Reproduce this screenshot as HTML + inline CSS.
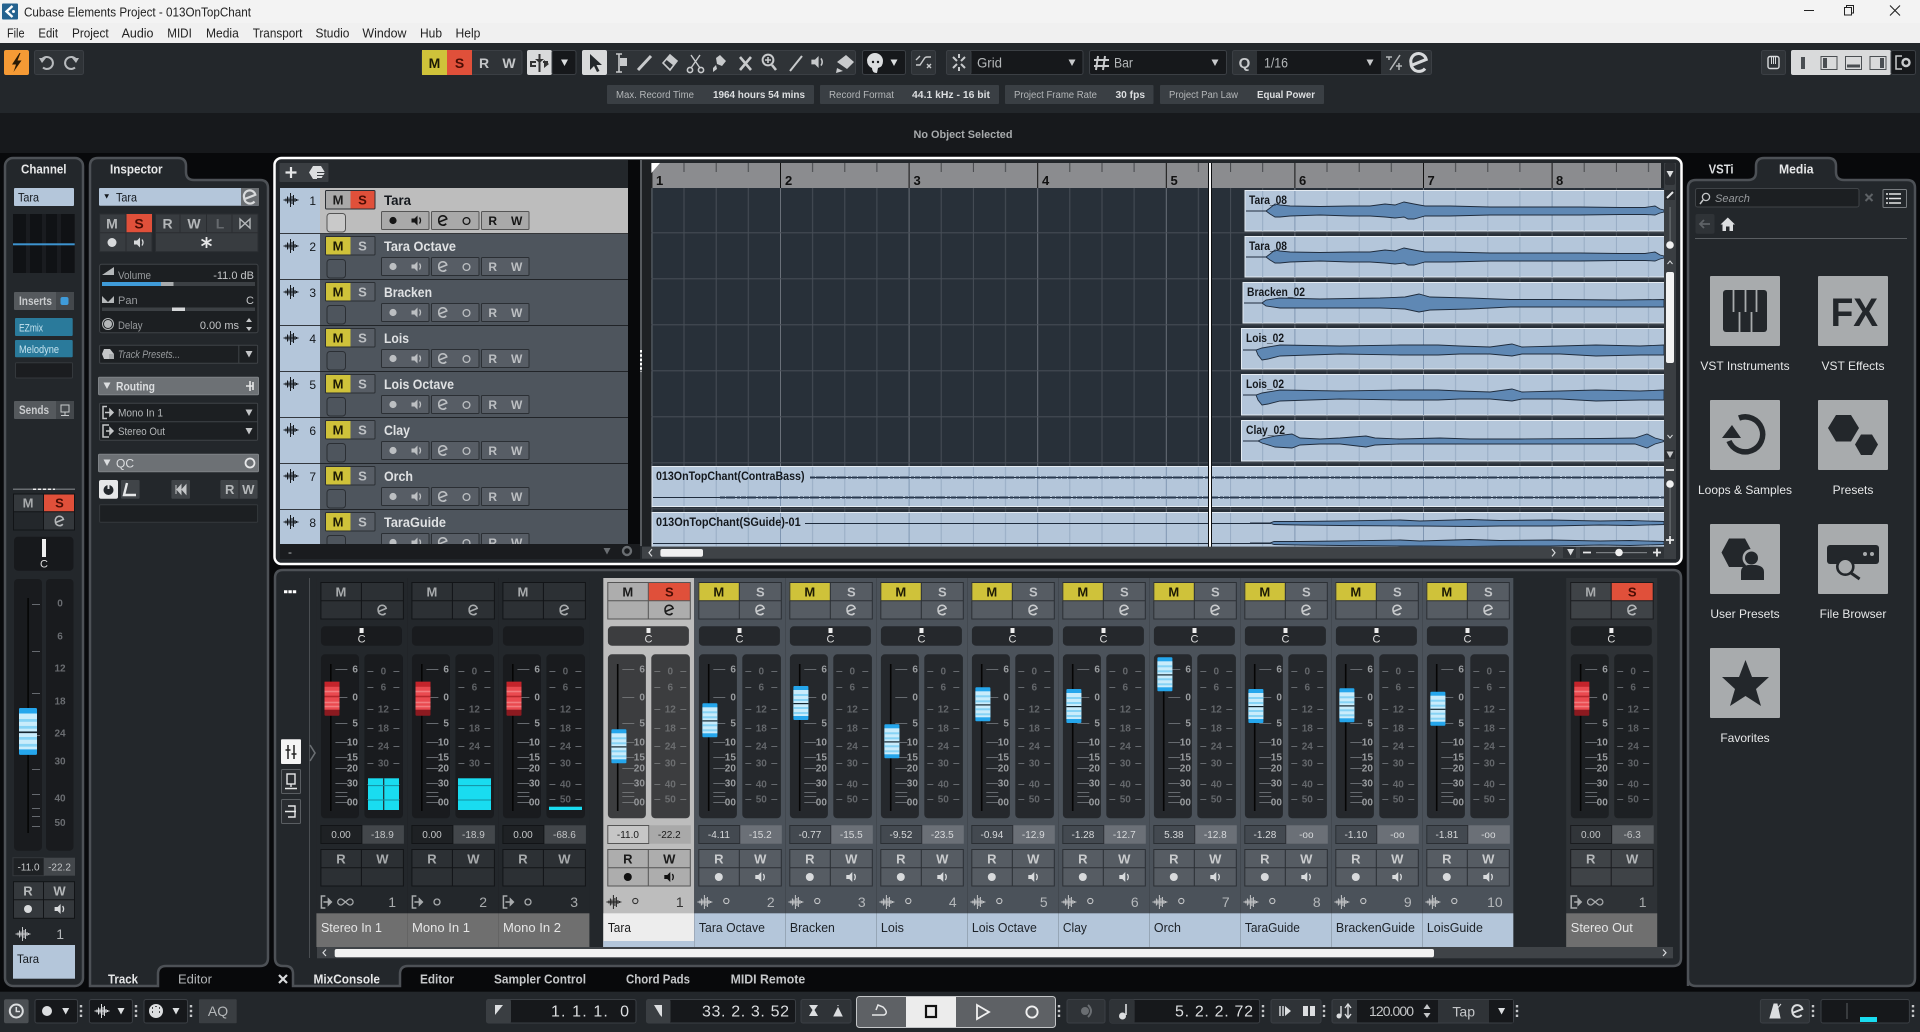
<!DOCTYPE html>
<html><head><meta charset="utf-8"><title>Cubase Elements Project - 013OnTopChant</title>
<style>
html,body{margin:0;padding:0;background:#08090b;width:1920px;height:1032px;overflow:hidden}
svg{display:block}
text{font-family:"Liberation Sans",sans-serif;fill:#c4c6c8;font-size:11px;white-space:pre}
.a{text-anchor:middle}.e{text-anchor:end}.b{font-weight:bold}
.f9{font-size:9.5px}.f10{font-size:10px}.f11{font-size:11px}.f12{font-size:12px}.f13{font-size:13px}.f14{font-size:14px}.f15{font-size:15px}.f16{font-size:16px}
.d{fill:#15171a}.w{fill:#fff}.g{fill:#989b9e}.l{fill:#dcdee0}
.gb{fill:#2f3337;stroke:#3b3f44}.dk{fill:#16181b;stroke:#3b3f44}
.tr{--bg:#4b525a;--c:#565c63;--bd:#2b2f34;--mf:#cfc23a;--mc:#1d1a05;--sf:#565c63;--sc:#c0c3c6;--tc:#c9cbcd;--ic:#d8dadc;--dk:#25282c;--v1:#434950;--v2:#6b7077;--vt:#d7d9db;--tk:#666a6f;--fn:#9a9da0;--mn:#64676b;--nm:#b4c6da;--nt:#1d2228;--num:#b5b8bb}
.in{--bg:#23272b;--c:#2c3034;--bd:#121417;--mf:#2c3034;--mc:#a8abad;--sf:#2c3034;--sc:transparent;--tc:#a8abad;--ic:transparent;--dk:#191b1e;--v1:#1e2124;--v2:#43474b;--vt:#c4c6c8;--tk:#666a6f;--fn:#9a9da0;--mn:#5e6165;--nm:#6f6f6f;--nt:#e6e6e6;--num:#a8abad}
.so{--bg:#2e3236;--c:#3f4347;--bd:#191b1e;--mf:#3f4347;--mc:#a8abad;--sf:#e0503a;--sc:#4a0d04;--tc:#b4b7b9;--ic:transparent;--dk:#1d2023;--v1:#313539;--v2:#565a5e;--vt:#c4c6c8;--tk:#666a6f;--fn:#9a9da0;--mn:#5e6165;--nm:#6f6f6f;--nt:#e6e6e6;--num:#a8abad}
.se{--bg:#bdbdbd;--c:#adadad;--bd:#555;--mf:#adadad;--mc:#1b1b1b;--sf:#e0503a;--sc:#4a0d04;--tc:#1b1b1b;--ic:#111;--dk:#3c3d3f;--v1:#c6c6c6;--v2:#a9a9a9;--vt:#1b1b1b;--tk:#6e7072;--fn:#95979a;--mn:#6c6e70;--nm:#ededed;--nt:#1b1b1b;--num:#333}
.r0{--rb:#4e555d;--rc:#575d65;--rm:#cfc23a;--rmc:#1d1a05;--rs:#575d65;--rsc:#bec1c4;--ri:#bcbfc2;--rbd:#2b2f34;--rck:#4e555d}
.r1{--rb:#bdbdbd;--rc:#a9a9a9;--rm:#a9a9a9;--rmc:#1b1b1b;--rs:#e0503a;--rsc:#4a0d04;--ri:#151515;--rbd:#555;--rck:#c9c9c9}
.fbg{fill:var(--bg)}.fc{fill:var(--c)}.fm{fill:var(--mf)}.fs{fill:var(--sf)}.fd{fill:var(--dk)}.fv1{fill:var(--v1)}.fv2{fill:var(--v2)}.fn2{fill:var(--nm)}
.sb{stroke:var(--bd);fill:none}.tk{stroke:var(--tk);fill:none}.tm{fill:var(--mc)}.ts{fill:var(--sc)}.tc{fill:var(--tc)}.vt{fill:var(--vt)}.nt{fill:var(--nt)}.num{fill:var(--num)}.fnum{fill:var(--fn)}.mnum{fill:var(--mn)}
.cc{color:var(--tc)}.ci{color:var(--ic)}.cn{color:var(--num)}
.rb{fill:var(--rb)}.rc{fill:var(--rc);stroke:var(--rbd)}.rm{fill:var(--rm)}.rs{fill:var(--rs)}.rmt{fill:var(--rmc)}.rst{fill:var(--rsc)}.rit{fill:var(--ri)}.ri{color:var(--ri)}.rck{fill:var(--rck);stroke:var(--rbd)}
.evt{fill:#b4c6da;stroke:#e4ebf2;stroke-width:1}
.wv{fill:#5f88b4;stroke:#1f2c3d;stroke-width:.9}
.tt{fill:#14181d;font-size:11.5px;font-weight:bold}
</style></head><body>
<svg xmlns="http://www.w3.org/2000/svg" width="1920" height="1032" viewBox="0 0 1920 1032">
<defs>
<g id="i-spk" fill="currentColor"><path d="M-5-2H-2L1-5V5L-2 2H-5Z"/><path d="M3-3Q5 0 3 3" fill="none" stroke="currentColor" stroke-width="1.3"/></g>
<path id="i-e" d="M-4.2 1.6L3.8-1.6A4 4 0 0 0-4.2.4A4.2 4.2 0 0 0 3.2 3.2" fill="none" stroke="currentColor" stroke-width="1.6"/>
<path id="i-wv" d="M-7.5 0H7.5M-5-1.5V1.5M-3.5-3.5V3.5M-2-2.5V2.5M-.5-7V7M1-4V4M2.5-5V5M4-2V2M5.5-1V1" fill="none" stroke="currentColor" stroke-width="1"/>
<polygon id="i-dn" points="-3.5,-3 3.5,-3 0,3.5" fill="currentColor"/>
<g id="i-in" fill="none" stroke="currentColor" stroke-width="1.5"><path d="M-1-6H-5V6H-1"/><path d="M-3 0H3"/><path d="M2-3L5 0L2 3Z" fill="currentColor"/></g>
<g id="i-out" fill="none" stroke="currentColor" stroke-width="1.5"><path d="M1-6H-5V6H1"/><path d="M-2 0H3"/><path d="M2-3L5 0L2 3Z" fill="currentColor"/></g>
<g id="i-dots" fill="#c4c6c8"><rect x="-1.2" y="-6" width="2.4" height="2.4"/><rect x="-1.2" y="-1.2" width="2.4" height="2.4"/><rect x="-1.2" y="3.6" width="2.4" height="2.4"/></g>
<g id="kb"><rect width="15" height="34" rx="1" fill="#25a6ec"/><rect y="4" width="15" height="26" fill="#c9ecfb"/><rect y="8" width="15" height="2" fill="#86d3f5"/><rect y="13" width="15" height="2" fill="#86d3f5"/><rect y="21" width="15" height="2" fill="#86d3f5"/><rect y="26" width="15" height="2" fill="#86d3f5"/><rect y="17" width="15" height="1.2" fill="#142630"/></g>
<g id="kr"><rect width="15" height="34" rx="1" fill="#8c1a20"/><rect y="0" width="15" height="5" fill="#c4242b"/><rect y="5" width="15" height="23" fill="#ea4a50"/><rect y="9" width="15" height="1.6" fill="#f27c7f"/><rect y="14" width="15" height="1.6" fill="#b8272d"/><rect y="20" width="15" height="1.6" fill="#f27c7f"/><rect y="24" width="15" height="1.6" fill="#f27c7f"/></g>
<g id="S">
<rect class="fbg" x="-4" y="578" width="91" height="369"/>
<rect class="fn2" x="-4" y="913.3" width="91" height="33.7"/>
<rect class="fm" x="0" y="582.3" width="41" height="18.4"/><rect class="fs" x="41" y="582.3" width="42.3" height="18.4"/>
<rect class="fc" x="0" y="600.7" width="83.3" height="18.6"/>
<path class="sb" d="M.5 582.5H83V619H.5ZM.5 600.7H83M41 582.5V619"/>
<text class="tm a b f13" x="20.5" y="596.5">M</text><text class="ts a b f13" x="62" y="596.5">S</text>
<use href="#i-e" x="62" y="610" class="cc"/>
<rect class="fd" x=".6" y="626.3" width="81" height="19.4" rx="4"/>
<rect class="fd" x=".6" y="654.3" width="38" height="164" rx="4"/><rect class="fd" x="44" y="654.3" width="38.6" height="164" rx="4"/>
<rect x="9.6" y="664" width="1.6" height="147" fill="#050505"/>
<path class="tk" d="M15 669.5H27M15 697.5H27M15 723.5H27M15 742.5H27M15 757.5H27M15 768.5H27M15 783.5H27M15 792.5H27M15 796.5H27M15 802.5H27M47 671.5H53M73 671.5H79M47 687.5H53M73 687.5H79M47 709.5H53M73 709.5H79M47 728.5H53M73 728.5H79M47 746.5H53M73 746.5H79M47 763.5H53M73 763.5H79M47 784.5H53M73 784.5H79M47 799.5H53M73 799.5H79"/>
<g class="fnum"><text class="fnum e f10 b" x="37.6" y="672.5">6</text><text class="fnum e f10 b" x="37.6" y="700.5">0</text><text class="fnum e f10 b" x="37.6" y="726.5">5</text><text class="fnum e f10 b" x="37.6" y="745.5">10</text><text class="fnum e f10 b" x="37.6" y="760.5">15</text><text class="fnum e f10 b" x="37.6" y="771.5">20</text><text class="fnum e f10 b" x="37.6" y="786.5">30</text><text class="fnum e f10 b" x="37.6" y="805.5">00</text></g>
<text class="mnum a f10 b" x="63" y="674.5">0</text><text class="mnum a f10 b" x="63" y="690.5">6</text><text class="mnum a f10 b" x="63" y="712.5">12</text><text class="mnum a f10 b" x="63" y="731.5">18</text><text class="mnum a f10 b" x="63" y="749.5">24</text><text class="mnum a f10 b" x="63" y="766.5">30</text><text class="mnum a f10 b" x="63" y="787.5">40</text><text class="mnum a f10 b" x="63" y="802.5">50</text>
<rect class="fv1" x=".5" y="825.5" width="41" height="18"/><rect class="sb" x=".5" y="825.5" width="41" height="18"/><rect class="fv2" x="42" y="825.3" width="41.5" height="18.4"/>
<rect class="fc" x="0" y="849.3" width="83.3" height="37"/>
<path class="sb" d="M.5 849.5H83V886H.5ZM.5 867.7H83M41 849.5V886"/>
<text class="tc a b f13" x="20.5" y="863.5">R</text><text class="tc a b f13" x="62" y="863.5">W</text>
<circle class="ci" cx="20.5" cy="877" r="4" fill="currentColor"/><use href="#i-spk" x="62" y="877" class="ci"/>
</g>
<g id="P"><rect x="39.2" y="628" width="4" height="5" fill="#eee"/><text class="a f11" x="41.2" y="642.5" style="fill:#ddd">C</text></g>
<g id="row">
<rect x="280" y="0" width="40" height="45.3" fill="#b4c6da"/><rect class="rb" x="320" y="0" width="308" height="45.3"/>
<rect x="280" y="45.3" width="348" height="1" fill="#16181b"/>
<use href="#i-wv" x="291" y="12" style="color:#14181d"/>
<rect class="rm" x="325.5" y="2.5" width="25" height="18.5"/><rect class="rs" x="350.5" y="2.5" width="24.5" height="18.5"/>
<rect x="325.5" y="2.5" width="49.5" height="18.5" rx="1" fill="none" stroke="#2b2f34"/>
<text class="rmt a b f13" x="338" y="16.5">M</text><text class="rst a b f13" x="362.5" y="16.5">S</text>
<rect class="rck" x="327" y="25.5" width="18.5" height="18.5" rx="3"/>
<rect class="rc" x="381.5" y="23.5" width="47.5" height="18" rx="1"/><rect class="rc" x="431.5" y="23.5" width="47.5" height="18" rx="1"/><rect class="rc" x="481.5" y="23.5" width="47.5" height="18" rx="1"/>
<circle class="rit" cx="393" cy="32.5" r="3.6"/><use href="#i-spk" x="416.5" y="32.5" class="ri"/><use href="#i-e" x="443" y="32.5" class="ri"/><circle cx="466.5" cy="33" r="3.4" fill="none" stroke="var(--ri)" stroke-width="1.3"/>
<text class="rit a b f12" x="492.7" y="37">R</text><text class="rit a b f12" x="516.7" y="37">W</text>
</g>
<pattern id="gp" patternUnits="userSpaceOnUse" x="651.4" y="187.3" width="128.6" height="46"><rect width="128.6" height="46" fill="#283039"/><path d="M.5 0V46" stroke="#6a7079"/><path d="M32.6 0V46M64.8 0V46M96.9 0V46" stroke="#474e57"/><path d="M0 45.5H129" stroke="#474e57"/></pattern>
<pattern id="ep" patternUnits="userSpaceOnUse" x="651.4" y="0" width="128.6" height="100"><path d="M.5 0V100" stroke="#7f96b2"/><path d="M32.6 0V100M64.8 0V100M96.9 0V100" stroke="#97acc4"/></pattern>
<pattern id="rp" patternUnits="userSpaceOnUse" x="651.4" y="163" width="128.6" height="25"><path d="M.5 0V25" stroke="#111"/><path d="M32.6 0V9M64.8 0V9M96.9 0V9" stroke="#44464a"/></pattern>
<path id="w1" class="wv" d="M1246 0H1266L1270-3L1275-7L1280-6L1290-5L1320-4.5L1350-5L1370-5L1385-7L1395-6L1404-9L1414-7L1425-5L1450-5L1490-4L1530-4L1580-4L1620-3.5L1645-3.5L1655-5L1660-2L1664-1V1L1660 2L1655 4L1645 3.5L1620 3.5L1580 4L1530 4L1490 4L1450 5L1425 5L1414 8L1408 8L1404 6L1395 7L1385 6L1370 5L1350 5L1320 4L1290 5L1280 6L1275 6L1270 3L1266 0Z"/>
<path id="w3" class="wv" d="M1244 0H1262L1266-3L1280-5L1320-4L1380-5L1405-6L1419-9L1430-6L1470-5L1510-3.5L1560-3.5L1620-3L1664-3.5V4L1620 4L1560 4L1510 4L1470 6L1430 7L1419 9L1405 6L1380 5L1320 5L1280 5L1266 3L1262 0Z"/>
<path id="w4" class="wv" d="M1243 0H1256L1262-2L1280-5L1340-4L1400-5L1438-5L1460-4L1490-3L1512-6L1522-3L1560-4L1596-5L1640-4L1664-5V5L1640 5L1596 6L1560 4L1522 4L1512 6L1490 4L1460 4L1438 5L1400 5L1340 4L1280 6L1268 9L1262 10L1258 5L1256 0Z"/>
<path id="w6" class="wv" d="M1243 0H1258L1262-2L1275-5L1292-7L1300-3L1320-2L1340-3L1366-5L1375-3L1400-2L1440-3L1470-2L1520-2L1600-2.5L1635-3L1647-7L1655-3L1664-.5V.5L1655 3L1647 7L1635 3L1600 3L1520 3L1470 3L1440 3L1400 3L1375 4L1366 6L1340 3L1320 3L1300 4L1292 7L1275 6L1262 2L1258 0Z"/>
<path id="w8" class="wv" d="M1250 0H1270L1274-1.5L1300-1.5L1340-2L1400-3L1420-2L1470-3.5L1500-2.5L1550-3L1600-2L1630-2.5L1664-1.5V1.5L1630 2.5L1600 2L1550 3L1500 3L1470 3.5L1420 3L1400 3L1340 2.5L1300 2L1274 1.5L1270 0Z"/>
<clipPath id="rowclip"><rect x="279" y="188" width="349" height="356"/></clipPath>
<clipPath id="evclip"><rect x="640" y="188" width="1024" height="358.7"/></clipPath>
</defs>

<rect width="1920" height="1032" fill="#08090b"/>
<!-- title / menu -->
<rect width="1920" height="23" fill="#f3f3f3"/><rect y="23" width="1920" height="20" fill="#f0f0f0"/>
<rect x="2" y="3.5" width="16" height="16" rx="1" fill="#24628f"/><path d="M12.5 6L6.5 11.5L12.5 17" fill="none" stroke="#fff" stroke-width="2.4"/><circle cx="13.5" cy="11.5" r="1.5" fill="#fff"/>
<text x="24" y="16.5" class="f13" style="fill:#222" textLength="227" lengthAdjust="spacingAndGlyphs">Cubase Elements Project - 013OnTopChant</text>
<g class="f13" style="font-size:13px">
<text x="7" y="37.5" style="fill:#222" textLength="17.5" lengthAdjust="spacingAndGlyphs" class="f13">File</text>
<text x="38.4" y="37.5" style="fill:#222" textLength="19.6" lengthAdjust="spacingAndGlyphs" class="f13">Edit</text>
<text x="72" y="37.5" style="fill:#222" textLength="36.6" lengthAdjust="spacingAndGlyphs" class="f13">Project</text>
<text x="121.6" y="37.5" style="fill:#222" textLength="31.9" lengthAdjust="spacingAndGlyphs" class="f13">Audio</text>
<text x="167.3" y="37.5" style="fill:#222" textLength="24.5" lengthAdjust="spacingAndGlyphs" class="f13">MIDI</text>
<text x="206" y="37.5" style="fill:#222" textLength="32.8" lengthAdjust="spacingAndGlyphs" class="f13">Media</text>
<text x="252.7" y="37.5" style="fill:#222" textLength="49.7" lengthAdjust="spacingAndGlyphs" class="f13">Transport</text>
<text x="315.5" y="37.5" style="fill:#222" textLength="33.9" lengthAdjust="spacingAndGlyphs" class="f13">Studio</text>
<text x="362.4" y="37.5" style="fill:#222" textLength="44.1" lengthAdjust="spacingAndGlyphs" class="f13">Window</text>
<text x="420" y="37.5" style="fill:#222" textLength="22" lengthAdjust="spacingAndGlyphs" class="f13">Hub</text>
<text x="455.5" y="37.5" style="fill:#222" textLength="24.9" lengthAdjust="spacingAndGlyphs" class="f13">Help</text>
</g>
<path d="M1804 10.5H1814" stroke="#222" stroke-width="1"/><rect x="1844.5" y="7.5" width="7" height="7.5" fill="none" stroke="#222"/><path d="M1846.5 7.5V5.5H1853.5V13H1851.5" fill="none" stroke="#222"/><path d="M1890 5.5L1900 15.5M1900 5.5L1890 15.5" stroke="#222" stroke-width="1.1"/>

<!-- toolbar bg -->
<rect y="43" width="1920" height="70" fill="#23272b"/><rect y="113" width="1920" height="40" fill="#17191c"/>
<rect x="4" y="50" width="25" height="25" rx="2" fill="#f59a35"/><path d="M19.5 53L12 64.5H16L13.5 72L21.5 60.5H17.5L20.5 53Z" fill="#2a1a05"/>
<rect class="gb" x="34.5" y="50.5" width="49" height="24" rx="2"/>
<path d="M42 59.5A6 6 0 1 1 43 67.5" fill="none" stroke="#b8bbbe" stroke-width="2"/><path d="M39 58H46L42 63Z" fill="#b8bbbe"/>
<path d="M76 59.5A6 6 0 1 0 75 67.5" fill="none" stroke="#b8bbbe" stroke-width="2"/><path d="M79 58H72L76 63Z" fill="#b8bbbe"/>
<rect class="gb" x="422" y="50.5" width="100" height="24" rx="2"/><rect x="422" y="50" width="25" height="25" fill="#cfc23a"/><rect x="447" y="50" width="25" height="25" fill="#e0503a"/>
<text class="a b f14" x="434.5" y="68" style="fill:#1d1a05">M</text><text class="a b f14" x="459.5" y="68" style="fill:#4a0d04">S</text><text class="a b f14" x="484" y="68">R</text><text class="a b f14" x="509" y="68">W</text>
<rect x="527" y="50" width="25" height="25" rx="2" fill="#d9dadb"/><rect class="dk" x="552" y="50.5" width="24" height="24" rx="2"/>
<path d="M539.5 54V72M536 62H531V66H536M543 62H548" stroke="#333" stroke-width="2" fill="none"/><path d="M535 59H544L539.5 63Z" fill="#333"/><path d="M544 60L549 64L544 68Z" fill="#333"/>
<use href="#i-dn" x="564.5" y="62.5" class="l" style="color:#dcdee0"/>
<rect class="gb" x="582.5" y="50.5" width="273" height="24" rx="2"/><rect x="582" y="50" width="25" height="25" rx="2" fill="#d9dadb"/>
<path d="M590 54V70L594 66L597 72L599.5 71L596.5 65H602Z" fill="#23272b"/>
<g fill="none" stroke="#c8cacc" stroke-width="1.6">
<path d="M616 54H622M616 72H622M619 54V72"/>
<path d="M638 70L651 56" stroke-width="3"/>
<path d="M691 55L700 68M700 55L691 68" stroke-width="1.4"/><circle cx="690" cy="70" r="2.6"/><circle cx="701" cy="70" r="2.6"/>
<path d="M740 57L751 70M751 57L740 70" stroke-width="2.6"/>
<circle cx="768" cy="60" r="5.4" stroke-width="2"/><path d="M772 65L776 70" stroke-width="2.6"/><path d="M765 60H771M768 57V63"/>
<path d="M790 71L802 56" stroke-width="2"/>
</g>
<path d="M620 58H627V66H620Z" fill="#c8cacc"/>
<path d="M663 63L670 55L677 61L670 70Z" fill="none" stroke="#c8cacc" stroke-width="1.6"/><path d="M666 59.5L670 55L677 61L673.5 65.5Z" fill="#c8cacc"/>
<path d="M716 58L720 55L726 61L722 66L717 64ZM713 68L716 65L717 69L713 72Z" fill="#c8cacc"/>
<use href="#i-spk" x="817" y="62" style="color:#c8cacc" transform="translate(-163 -12.4) scale(1.2)"/>
<path d="M837 62L846 55L854 62L847 69ZM837 68L843 71L836 73Z" fill="#c8cacc"/>
<rect class="dk" x="862.5" y="50.5" width="43" height="24" rx="2"/><path d="M875 53A8 8 0 0 1 883 61Q883 67 878 68L877 73Q872 73 872 68Q867 66 867 60A8 8 0 0 1 875 53Z" fill="#dcdee0"/><circle cx="873" cy="62" r="1.2" fill="#15171a"/><circle cx="878" cy="62" r="1.2" fill="#15171a"/>
<use href="#i-dn" x="894" y="62.5" style="color:#dcdee0"/>
<rect class="gb" x="911.5" y="50.5" width="24" height="24" rx="2"/><path d="M916 65H920L924 59Q925 57 927 57H931M927 64L931 68M931 64L927 68M916 60L920 56" fill="none" stroke="#c8cacc" stroke-width="1.4"/>
<rect class="dk" x="946.5" y="50.5" width="136.5" height="24" rx="2"/><rect class="gb" x="946.5" y="50.5" width="24.5" height="24" rx="2"/>
<path d="M959 54V58M959 67V71M953 57L957 61M957 64L953 68M965 57L961 61M961 64L965 68" stroke="#c8cacc" stroke-width="2" fill="none"/>
<text x="977" y="67.5" class="f14" style="fill:#b4b7b9" textLength="25" lengthAdjust="spacingAndGlyphs">Grid</text><use href="#i-dn" x="1072" y="62.5" style="color:#c8cacc"/>
<rect class="dk" x="1089.5" y="50.5" width="137" height="24" rx="2"/>
<path d="M1098 56L1096 70M1105 56L1103 70M1094 60H1109M1094 66H1109" stroke="#c8cacc" stroke-width="2" fill="none"/>
<text x="1114" y="67.5" class="f14" style="fill:#b4b7b9" textLength="19" lengthAdjust="spacingAndGlyphs">Bar</text><use href="#i-dn" x="1215" y="62.5" style="color:#c8cacc"/>
<rect class="gb" x="1232.5" y="50.5" width="199" height="24" rx="2"/><rect x="1257" y="51" width="124" height="23" fill="#16181b"/>
<text x="1244.5" y="68" class="a b f15" style="fill:#c8cacc">Q</text>
<text x="1264" y="67.5" class="f14" style="fill:#b4b7b9" textLength="24" lengthAdjust="spacingAndGlyphs">1/16</text><use href="#i-dn" x="1370" y="62.5" style="color:#c8cacc"/>
<path d="M1386 57H1392M1389 57V60M1400 55L1390 70M1396 66H1402M1399 63V70" fill="none" stroke="#b4b7b9" stroke-width="1.5"/>
<use href="#i-e" transform="translate(1419 62.5) scale(1.9)" style="color:#d8dadc"/>
<rect class="gb" x="1761.5" y="50.5" width="24" height="24" rx="2"/><rect x="1768" y="56.5" width="11" height="12" rx="2" fill="none" stroke="#d8dadc" stroke-width="1.4"/><path d="M1771.5 56V64M1773.5 56V64M1775.5 56V64" stroke="#d8dadc"/>
<rect x="1791" y="50" width="100" height="25" rx="2" fill="#d9dadb"/><rect class="dk" x="1891" y="50.5" width="24.5" height="24" rx="2"/>
<g fill="#4a4e52"><rect x="1801" y="57" width="4" height="12"/><rect x="1821" y="56.5" width="16" height="13" fill="none" stroke="#4a4e52"/><rect x="1823" y="58" width="4" height="10"/><rect x="1845.5" y="56.5" width="16" height="13" fill="none" stroke="#4a4e52"/><rect x="1847" y="64.5" width="13" height="3"/><rect x="1870" y="56.5" width="16" height="13" fill="none" stroke="#4a4e52"/><rect x="1880" y="58" width="4" height="10"/></g>
<path d="M1902 56H1896V69H1902" fill="none" stroke="#c8cacc" stroke-width="1.5"/><circle cx="1906" cy="62.5" r="3.5" fill="none" stroke="#c8cacc" stroke-width="2.4"/>

<!-- info chips -->
<g fill="#3a3f44"><rect x="607" y="85" width="207" height="19" rx="1"/><rect x="820" y="85" width="179" height="19" rx="1"/><rect x="1005" y="85" width="148.5" height="19" rx="1"/><rect x="1160" y="85" width="164" height="19" rx="1"/></g>
<g class="f10">
<text x="616" y="98" class="f10" style="fill:#b4b7b9" textLength="78" lengthAdjust="spacingAndGlyphs">Max. Record Time</text><text x="713" y="98" class="f10 b" style="fill:#dcdee0" textLength="92" lengthAdjust="spacingAndGlyphs">1964 hours 54 mins</text>
<text x="829" y="98" class="f10" style="fill:#b4b7b9" textLength="65" lengthAdjust="spacingAndGlyphs">Record Format</text><text x="912" y="98" class="f10 b" style="fill:#dcdee0" textLength="78" lengthAdjust="spacingAndGlyphs">44.1 kHz - 16 bit</text>
<text x="1014" y="98" class="f10" style="fill:#b4b7b9" textLength="83" lengthAdjust="spacingAndGlyphs">Project Frame Rate</text><text x="1115.5" y="98" class="f10 b" style="fill:#dcdee0" textLength="29.5" lengthAdjust="spacingAndGlyphs">30 fps</text>
<text x="1169" y="98" class="f10" style="fill:#b4b7b9" textLength="69" lengthAdjust="spacingAndGlyphs">Project Pan Law</text><text x="1257" y="98" class="f10 b" style="fill:#dcdee0" textLength="58" lengthAdjust="spacingAndGlyphs">Equal Power</text>
</g>
<text x="913.5" y="138" class="f11 b" style="fill:#a8abad" textLength="99" lengthAdjust="spacingAndGlyphs">No Object Selected</text>

<!-- Channel panel -->
<rect x="5" y="158" width="78" height="828" rx="8" fill="#23272b" stroke="#4d5156" stroke-width="2.5"/>
<text class="b f13" x="21" y="173.5" style="fill:#e6e7e8" textLength="45.5" lengthAdjust="spacingAndGlyphs">Channel</text>
<rect x="14" y="188" width="60" height="18" rx="1" fill="#b4c6da"/><text x="18" y="201.5" class="f12" style="fill:#14181d" textLength="21" lengthAdjust="spacingAndGlyphs">Tara</text>
<rect x="13" y="214" width="61.7" height="59" fill="#101215"/><path d="M28 214V273M44 214V273M59 214V273" stroke="#1a1c20" stroke-width="4"/><rect x="13" y="243.3" width="61.7" height="2" fill="#3d93cf"/>
<rect x="14" y="292" width="60" height="18" rx="1" fill="#55595d"/><rect x="56" y="292" width="18" height="18" fill="#44484c"/><text x="19" y="305" class="f12 b" style="fill:#c9cbcd" textLength="33" lengthAdjust="spacingAndGlyphs">Inserts</text><rect x="60.5" y="297" width="8" height="8" rx="2" fill="#3f9bd9"/>
<rect x="15" y="318" width="57.7" height="18" rx="1" fill="#2a7a9b"/><text x="19" y="331.5" class="f11" style="fill:#c5e3ef" textLength="24" lengthAdjust="spacingAndGlyphs">EZmix</text>
<rect x="15" y="340" width="57.7" height="17.3" rx="1" fill="#2a7a9b"/><text x="19" y="353" class="f11" style="fill:#c5e3ef" textLength="40" lengthAdjust="spacingAndGlyphs">Melodyne</text>
<rect x="15.5" y="362.7" width="57" height="15.3" rx="1" fill="#1b1d20" stroke="#34383c"/>
<rect x="14" y="401" width="60" height="18" rx="1" fill="#55595d"/><rect x="56" y="401" width="18" height="18" fill="#44484c"/><text x="19" y="414" class="f12 b" style="fill:#c9cbcd" textLength="30" lengthAdjust="spacingAndGlyphs">Sends</text><rect x="61" y="405" width="8" height="7" fill="none" stroke="#c9cbcd"/><path d="M65 412V415M61 415.5H69" stroke="#c9cbcd"/>
<rect x="13" y="488.5" width="62" height="1.5" fill="#6a6e72"/><path d="M33 489.2H55" stroke="#eee" stroke-width="1.5" stroke-dasharray="3 2"/>
<rect x="13" y="493.7" width="30.5" height="18" fill="#34383c"/><rect x="43.5" y="493.7" width="31.5" height="18" fill="#e0503a"/><rect x="13" y="511.7" width="30.5" height="18.6" fill="#23272b"/><rect x="43.5" y="511.7" width="31.5" height="18.6" fill="#34383c"/>
<path d="M13.5 494H74.5V530H13.5ZM13.5 511.7H74.5M43.5 494V530" fill="none" stroke="#121417"/>
<text class="a b f13" x="28" y="507.5" style="fill:#a8abad">M</text><text class="a b f13" x="59.5" y="507.5" style="fill:#4a0d04">S</text><use href="#i-e" x="59.6" y="521" style="color:#b4b7b9"/>
<rect x="14" y="536.7" width="59.5" height="34" rx="4" fill="#17191c"/><rect x="42" y="539" width="4" height="18" fill="#eee"/><text class="a f11" x="44" y="567.5" style="fill:#ddd">C</text>
<rect x="14" y="579" width="28" height="271.7" rx="4" fill="#191b1e"/><rect x="46" y="579" width="27.5" height="271.7" rx="4" fill="#191b1e"/>
<rect x="27.3" y="598" width="1.6" height="235" fill="#050505"/>
<path d="M32 604.5H40M32 651.5H40M32 693.5H40M32 735.5H40M32 769.5H40M32 794.5H40M32 808.5H40M32 816.5H40M32 826.5H40" stroke="#666a6f" fill="none"/>
<g style="--mn:#6a6d71"><text class="mnum a f10 b" x="60" y="606.5">0</text><text class="mnum a f10 b" x="60" y="639.5">6</text><text class="mnum a f10 b" x="60" y="671.5">12</text><text class="mnum a f10 b" x="60" y="704.5">18</text><text class="mnum a f10 b" x="60" y="736.5">24</text><text class="mnum a f10 b" x="60" y="764.5">30</text><text class="mnum a f10 b" x="60" y="801.5">40</text><text class="mnum a f10 b" x="60" y="826">50</text></g>
<use href="#kb" transform="translate(19 708) scale(1.2 1.38)"/>
<rect x="13" y="857.7" width="31" height="18" fill="#1e2124" stroke="#34383c"/><rect x="44" y="857.7" width="31" height="18" fill="#43474b"/>
<text class="a f10" x="28.5" y="870.5" style="fill:#c4c6c8">-11.0</text><text class="a f10" x="59.5" y="870.5" style="fill:#c4c6c8">-22.2</text>
<rect x="13.5" y="881.7" width="61" height="36.6" fill="#34383c" stroke="#121417"/><path d="M13.5 899.7H74.5M43.5 881.7V918.3" stroke="#121417"/>
<text class="a b f13" x="28" y="895.5" style="fill:#b4b7b9">R</text><text class="a b f13" x="59.5" y="895.5" style="fill:#b4b7b9">W</text><circle cx="28" cy="909" r="4" fill="#d8dadc"/><use href="#i-spk" x="59.6" y="909" style="color:#d8dadc"/>
<use href="#i-wv" x="23" y="934" style="color:#c4c6c8"/><text class="e f14" x="64" y="939" style="fill:#b4b7b9">1</text>
<rect x="13" y="945" width="62" height="33.7" fill="#b4c6da"/><text x="17" y="963" class="f12" style="fill:#14181d" textLength="22" lengthAdjust="spacingAndGlyphs">Tara</text>

<!-- Inspector panel -->
<path d="M90 986V166Q90 158 98 158H178Q186 158 186 166V172Q186 180 194 180H260Q268 180 268 188V958Q268 966 260 966H166Q158 966 158 974V986Z" fill="#23272b" stroke="#4d5156" stroke-width="2.5"/>
<text class="b f13" x="110" y="173.5" style="fill:#e6e7e8" textLength="52.5" lengthAdjust="spacingAndGlyphs">Inspector</text>
<text class="b f13" x="108" y="983.5" style="fill:#e6e7e8" textLength="30" lengthAdjust="spacingAndGlyphs">Track</text><text class="f13" x="178" y="983.5" style="fill:#b4b7b9" textLength="34" lengthAdjust="spacingAndGlyphs">Editor</text>
<rect x="99" y="188" width="160" height="17.7" rx="1" fill="#b4c6da"/><rect x="241" y="188" width="18" height="17.7" fill="#6b6f73"/><use href="#i-dn" x="107" y="196" style="color:#14181d" transform="translate(35 65) scale(.67)"/><text x="116" y="201.5" class="f12" style="fill:#14181d" textLength="21" lengthAdjust="spacingAndGlyphs">Tara</text><use href="#i-e" transform="translate(250 197) scale(1.4)" style="color:#d8dadc"/>
<rect x="99.6" y="214" width="52.4" height="37.7" fill="#383c40" stroke="#2a2d31"/><rect x="126" y="214" width="26" height="18.7" fill="#e0503a"/><path d="M99.6 232.7H152M126 214V251.7" stroke="#2a2d31"/>
<text class="a b f14" x="112" y="228.5" style="fill:#b4b7b9">M</text><text class="a b f14" x="139" y="228.5" style="fill:#4a0d04">S</text><circle cx="112" cy="242.5" r="4.5" fill="#d8dadc"/><use href="#i-spk" x="139" y="242.5" style="color:#d8dadc"/>
<rect x="155.5" y="214" width="102.5" height="37.7" fill="#383c40" stroke="#2a2d31"/><path d="M155.5 232.7H258M180 214V232.7M206.5 214V232.7M232 214V232.7" stroke="#2a2d31"/>
<text class="a b f14" x="167.5" y="228.5" style="fill:#b4b7b9">R</text><text class="a b f14" x="194" y="228.5" style="fill:#b4b7b9">W</text><text class="a b f14" x="220" y="228.5" style="fill:#666a6e">L</text>
<path d="M240 219L245 223.5L240 228ZM250 219L245 223.5L250 228Z" fill="none" stroke="#b4b7b9" stroke-width="1.4"/>
<path d="M206.5 237V248M201.5 239.5L211.5 245.5M211.5 239.5L201.5 245.5" stroke="#e6e7e8" stroke-width="1.8"/>
<rect x="99.6" y="264.3" width="158.4" height="68.4" rx="2" fill="#1c1f22" stroke="#3f4347"/>
<path d="M102 275H114V267Z" fill="#b4b7b9"/><text x="118" y="279" class="f11" style="fill:#989b9e" textLength="33" lengthAdjust="spacingAndGlyphs">Volume</text><text class="e f11" x="254" y="279" style="fill:#c4c6c8">-11.0 dB</text>
<rect x="102" y="282" width="153" height="4" fill="#3c4044"/><rect x="102" y="282" width="59" height="4" fill="#3f9bd9"/><rect x="161" y="282" width="12.5" height="4" fill="#a8abad"/>
<path d="M102 296L108 302L114 296V303H102Z" fill="#b4b7b9"/><text x="118" y="304" class="f11" style="fill:#989b9e">Pan</text><text class="e f11" x="254" y="304" style="fill:#c4c6c8">C</text>
<rect x="102" y="307.5" width="153" height="3.5" fill="#3c4044"/><rect x="172" y="307.5" width="13" height="3.5" fill="#d4d6d8"/>
<circle cx="108" cy="324" r="4" fill="#b4b7b9"/><circle cx="108" cy="324" r="5.5" fill="none" stroke="#b4b7b9"/><text x="118" y="329" class="f11" style="fill:#989b9e" textLength="24.5" lengthAdjust="spacingAndGlyphs">Delay</text><text class="e f11" x="239" y="329" style="fill:#c4c6c8">0.00 ms</text><path d="M246 322L249 318L252 322ZM246 327L249 331L252 327Z" fill="#c4c6c8"/>
<rect x="99.6" y="345.3" width="158" height="18" rx="1" fill="#1c1f22" stroke="#3f4347"/><path d="M238.8 345.3V363.3" stroke="#3f4347"/>
<path d="M104 349H110L114 354L110 359H104L102 354Z" fill="#c4c6c8"/><rect x="109" y="354" width="5" height="5" fill="#a8abad"/><text x="118" y="358" class="f11" style="fill:#989b9e;font-style:italic" textLength="62" lengthAdjust="spacingAndGlyphs">Track Presets...</text><use href="#i-dn" x="249" y="354" style="color:#c4c6c8"/>
<rect x="98.5" y="377.3" width="160" height="17.4" rx="1" fill="#6d7175" stroke="#7f8387"/><use href="#i-dn" x="107" y="385.5" style="color:#dcdee0"/><text x="116" y="390.5" class="f12 b" style="fill:#dcdee0" textLength="39" lengthAdjust="spacingAndGlyphs">Routing</text>
<path d="M246 386H253M253 382V390M250 381V391" stroke="#e6e7e8" stroke-width="1.6" fill="none"/>
<rect x="99.6" y="403.3" width="158" height="37" rx="1" fill="#1c1f22" stroke="#3f4347"/><path d="M99.6 421.7H257.6" stroke="#3f4347"/>
<use href="#i-in" x="108" y="412.5" style="color:#c4c6c8"/><text x="118" y="416.5" class="f11" style="fill:#b4b7b9" textLength="45" lengthAdjust="spacingAndGlyphs">Mono In 1</text><use href="#i-dn" x="249" y="412.5" style="color:#c4c6c8"/>
<use href="#i-out" x="108" y="431" style="color:#c4c6c8"/><text x="118" y="435" class="f11" style="fill:#b4b7b9" textLength="47" lengthAdjust="spacingAndGlyphs">Stereo Out</text><use href="#i-dn" x="249" y="431" style="color:#c4c6c8"/>
<rect x="98.5" y="454.3" width="160" height="17.4" rx="1" fill="#6d7175" stroke="#7f8387"/><use href="#i-dn" x="107" y="462.5" style="color:#dcdee0"/><text x="116" y="467.5" class="f12" style="fill:#dcdee0">QC</text><circle cx="250" cy="463" r="4.5" fill="none" stroke="#e6e7e8" stroke-width="1.8"/>
<rect x="99" y="480" width="19" height="18.7" rx="2" fill="#e6e7e8"/><circle cx="108.5" cy="490" r="5" fill="#23272b"/><rect x="107.5" y="483" width="2" height="6" fill="#e6e7e8"/>
<rect x="121" y="480" width="18.6" height="18.7" rx="1" fill="#404448"/><path d="M127 483L124 495H136" fill="none" stroke="#e6e7e8" stroke-width="2.4"/>
<rect x="171.4" y="480" width="18.6" height="18.7" rx="1" fill="#404448"/><path d="M176 485V494M181 485L177 489.5L181 494ZM186 485L182 489.5L186 494Z" fill="#c4c6c8" stroke="#c4c6c8"/>
<rect x="220.4" y="480" width="37.2" height="18.7" rx="1" fill="#404448"/><path d="M239 480V498.7" stroke="#2a2d31"/><text class="a b f13" x="229.7" y="494" style="fill:#b4b7b9">R</text><text class="a b f13" x="248.3" y="494" style="fill:#b4b7b9">W</text>
<rect x="99.6" y="504.7" width="158" height="17.6" rx="1" fill="#1c1f22" stroke="#34383c"/>

<!-- Track panel -->
<rect x="274.5" y="158" width="1407" height="406" rx="7" fill="#23272b" stroke="#fff" stroke-width="2.5"/>
<rect x="279.5" y="163" width="49" height="19" rx="1" fill="#3a3e42"/>
<path d="M291 167V178M285.5 172.5H296.5" stroke="#e6e7e8" stroke-width="2.2"/><path d="M313 166H321L325 172.5L321 179H313L309 172.5Z" fill="#dcdee0"/><path d="M317 172.5H325M317 175.5H325M317 178.5H325" stroke="#3a3e42"/>
<rect x="628" y="160" width="12" height="385" fill="#08090b"/><rect x="640" y="160" width="2" height="386" fill="#565a5e"/><rect x="642" y="160" width="9.4" height="386" fill="#1e2124"/>
<path d="M641 350V372" stroke="#fff" stroke-width="2" stroke-dasharray="2.5 1.8"/>
<rect x="280" y="544" width="360" height="15" fill="#1a1c1f"/>
<text x="288" y="556" class="f12" style="fill:#b4b7b9">-</text><use href="#i-dn" x="607" y="551" style="color:#6a6e72"/><circle cx="627" cy="551" r="4" fill="none" stroke="#6a6e72" stroke-width="2.4"/>

<g clip-path="url(#rowclip)">
<use href="#row" class="r1" y="188"/>
<use href="#row" class="r0" y="234"/><use href="#row" class="r0" y="280"/><use href="#row" class="r0" y="326"/><use href="#row" class="r0" y="372"/><use href="#row" class="r0" y="418"/><use href="#row" class="r0" y="464"/><use href="#row" class="r0" y="510"/>
<g><text x="316" y="205" class="e f12" style="fill:#14181d">1</text><text x="316" y="251" class="e f12" style="fill:#14181d">2</text><text x="316" y="297" class="e f12" style="fill:#14181d">3</text><text x="316" y="343" class="e f12" style="fill:#14181d">4</text><text x="316" y="389" class="e f12" style="fill:#14181d">5</text><text x="316" y="435" class="e f12" style="fill:#14181d">6</text><text x="316" y="481" class="e f12" style="fill:#14181d">7</text><text x="316" y="527" class="e f12" style="fill:#14181d">8</text></g>
<text x="384" y="205" class="f14 b" style="fill:#14181d" textLength="27" lengthAdjust="spacingAndGlyphs">Tara</text>
<text x="384" y="251" class="f14 b" style="fill:#dfe1e3" textLength="72" lengthAdjust="spacingAndGlyphs">Tara Octave</text>
<text x="384" y="297" class="f14 b" style="fill:#dfe1e3" textLength="48" lengthAdjust="spacingAndGlyphs">Bracken</text>
<text x="384" y="343" class="f14 b" style="fill:#dfe1e3" textLength="25" lengthAdjust="spacingAndGlyphs">Lois</text>
<text x="384" y="389" class="f14 b" style="fill:#dfe1e3" textLength="70" lengthAdjust="spacingAndGlyphs">Lois Octave</text>
<text x="384" y="435" class="f14 b" style="fill:#dfe1e3" textLength="26" lengthAdjust="spacingAndGlyphs">Clay</text>
<text x="384" y="481" class="f14 b" style="fill:#dfe1e3" textLength="29" lengthAdjust="spacingAndGlyphs">Orch</text>
<text x="384" y="527" class="f14 b" style="fill:#dfe1e3" textLength="62" lengthAdjust="spacingAndGlyphs">TaraGuide</text>
</g>

<!-- arrange -->
<rect x="651.4" y="163" width="1009.6" height="25" fill="#8b8c8f"/><rect x="651.4" y="163" width="1009.6" height="25" fill="url(#rp)"/>
<path d="M651.4 163H660L651.4 173Z" fill="#fff"/>
<g><text x="656" y="185" class="f13 b" style="fill:#111">1</text><text x="785" y="185" class="f13 b" style="fill:#111">2</text><text x="913.5" y="185" class="f13 b" style="fill:#111">3</text><text x="1042" y="185" class="f13 b" style="fill:#111">4</text><text x="1170.5" y="185" class="f13 b" style="fill:#111">5</text><text x="1299" y="185" class="f13 b" style="fill:#111">6</text><text x="1427.5" y="185" class="f13 b" style="fill:#111">7</text><text x="1556" y="185" class="f13 b" style="fill:#111">8</text></g>
<rect x="651.4" y="188" width="1012.6" height="358.7" fill="url(#gp)"/>
<g clip-path="url(#evclip)">
<rect class="evt" x="1245" y="190.5" width="425" height="40.5"/><rect class="evt" x="1245" y="236.5" width="425" height="40.5"/><rect class="evt" x="1243" y="282.5" width="427" height="40.5"/><rect class="evt" x="1241.5" y="328.5" width="430" height="40.5"/><rect class="evt" x="1241.5" y="374.5" width="430" height="40.5"/><rect class="evt" x="1241.5" y="420.5" width="430" height="40.5"/><rect class="evt" x="652" y="466.5" width="1020" height="40"/><rect class="evt" x="652" y="512.5" width="1020" height="50"/>
<rect x="1246" y="191" width="420" height="40" fill="url(#ep)"/><rect x="1246" y="237" width="420" height="40" fill="url(#ep)"/><rect x="1244" y="283" width="420" height="40" fill="url(#ep)"/><rect x="1242" y="329" width="422" height="40" fill="url(#ep)"/><rect x="1242" y="375" width="422" height="40" fill="url(#ep)"/><rect x="1242" y="421" width="422" height="40" fill="url(#ep)"/><rect x="653" y="467" width="1011" height="39" fill="url(#ep)"/><rect x="653" y="513" width="1011" height="34" fill="url(#ep)"/>
<use href="#w1" y="211"/><use href="#w1" y="257"/><use href="#w3" y="303"/><use href="#w4" y="350"/><use href="#w4" y="395"/><use href="#w6" y="441"/>
<path d="M810 477.5H1664M653 497.5H1664M805 523.5H1664M653 543.5H1664" stroke="#1f2c3d" stroke-width="1"/>
<path d="M810 477.5H1664M720 497.5H1664" stroke="#2a3a50" stroke-width="2" stroke-dasharray="5 1 9 2 3 1"/>
<use href="#w8" y="523"/><use href="#w8" y="543"/>
<text x="1249" y="204" class="tt" textLength="38" lengthAdjust="spacingAndGlyphs">Tara_08</text><text x="1249" y="250" class="tt" textLength="38" lengthAdjust="spacingAndGlyphs">Tara_08</text><text x="1247" y="296" class="tt" textLength="58" lengthAdjust="spacingAndGlyphs">Bracken_02</text><text x="1246" y="342" class="tt" textLength="38" lengthAdjust="spacingAndGlyphs">Lois_02</text><text x="1246" y="388" class="tt" textLength="38" lengthAdjust="spacingAndGlyphs">Lois_02</text><text x="1246" y="434" class="tt" textLength="39" lengthAdjust="spacingAndGlyphs">Clay_02</text>
<text x="656" y="480" class="tt" textLength="148.5" lengthAdjust="spacingAndGlyphs">013OnTopChant(ContraBass)</text>
<text x="656" y="526" class="tt" textLength="144.7" lengthAdjust="spacingAndGlyphs">013OnTopChant(SGuide)-01</text>
</g>
<rect x="1208" y="163" width="4" height="384" fill="#0c0e10"/><rect x="1209" y="163" width="2" height="384" fill="#fff"/>
<!-- arrange scrollbars -->
<rect x="642" y="546.7" width="1022" height="12" fill="#3f4347"/><rect x="660.4" y="549" width="42.6" height="7.7" rx="2" fill="#f0f0f0"/>
<path d="M652 549L649 552.7L652 556.4" stroke="#d8dadc" fill="none" stroke-width="1.2"/>
<path d="M1552 549L1555 552.7L1552 556.4" stroke="#d8dadc" fill="none" stroke-width="1.2"/>
<rect x="1563" y="547" width="13" height="11" fill="#2f3337"/><use href="#i-dn" x="1570.6" y="552" style="color:#d8dadc"/>
<rect x="1580" y="547" width="84" height="11" fill="#2f3337"/><path d="M1583 552.5H1591M1653 552.5H1661M1657 548.5V556.5" stroke="#e6e7e8" stroke-width="1.8"/><rect x="1596" y="552" width="51" height="1.2" fill="#7a7e82"/><circle cx="1619" cy="552.5" r="3.8" fill="#f0f0f0"/>
<rect x="1664" y="163" width="12" height="396" fill="#3a3e42"/>
<rect x="1665" y="163" width="10" height="22" rx="2" fill="#2a2d31"/><use href="#i-dn" x="1670" y="174" style="color:#dcdee0"/>
<rect x="1665" y="190" width="10" height="10" fill="#2a2d31"/><path d="M1667 198L1673 192" stroke="#e6e7e8" stroke-width="2"/>
<rect x="1669.5" y="207" width="1.2" height="38" fill="#6a6e72"/><circle cx="1670" cy="245" r="3.8" fill="#f0f0f0"/>
<path d="M1667.5 264L1670 261L1672.5 264M1667.5 435L1670 438L1672.5 435" stroke="#d8dadc" fill="none"/>
<rect x="1666" y="272" width="8" height="91" rx="2" fill="#f2f2f2"/>
<rect x="1665" y="450" width="10" height="9" fill="#2a2d31"/><use href="#i-dn" x="1670" y="454.5" style="color:#c4c6c8"/>
<path d="M1666 470H1674M1666 540H1674M1670 536V544" stroke="#e6e7e8" stroke-width="1.8"/><rect x="1669.5" y="487" width="1.2" height="48" fill="#6a6e72"/><circle cx="1670" cy="484" r="3.8" fill="#f0f0f0"/>

<!-- Mixer panel -->
<path d="M275 578Q275 570 283 570H1673Q1681 570 1681 578V958Q1681 966 1673 966H408Q400 966 400 974V986H293V974Q293 966 285 966H283Q275 966 275 958Z" fill="#23272b" stroke="#4d5156" stroke-width="2.5"/>
<path d="M284 591.7H297" stroke="#fff" stroke-width="3" stroke-dasharray="3.4 1"/><rect x="309" y="578" width="1" height="380" fill="#4a4e52"/>
<rect x="281" y="739.3" width="20" height="24.7" rx="1" fill="#f4f4f4"/><path d="M288 745V759M294 745V759M285.5 750H290.5M291.5 754H296.5" stroke="#222" stroke-width="1.5"/>
<rect x="281.5" y="769.5" width="19" height="24" rx="1" fill="#2a2d31" stroke="#5a5e62"/><rect x="287" y="774" width="8" height="10" fill="none" stroke="#e6e7e8" stroke-width="1.4"/><path d="M291 784V787M285 788.5H297" stroke="#e6e7e8" stroke-width="1.4"/>
<rect x="281.5" y="799.5" width="19" height="24" rx="1" fill="#2a2d31" stroke="#5a5e62"/><path d="M285 811.5H296M288 806H295V817H288" fill="none" stroke="#e6e7e8" stroke-width="1.4"/>
<path d="M310 745L315 753L310 761" fill="none" stroke="#6a6e72" stroke-width="1.6"/>

<g class="in" transform="translate(320.4)"><use href="#S"/><use href="#P"/><use href="#kr" x="4.1" y="681.7"/>
<rect x="47.6" y="778.3" width="31" height="31.7" fill="#19dcf0"/><path d="M63.3 778.3V810" stroke="#23272b" stroke-width="1.2"/><path d="M47.6 785.6H78.6M47.6 800H78.6" stroke="#148fa0"/>
<rect x="87" y="578" width="1" height="335" fill="#111"/>
<use href="#i-in" x="6" y="902" class="cn"/><path d="M22 899.5A3 3 0 1 0 22 904.5L28 899.5A3 3 0 1 1 28 904.5Z" fill="none" stroke="#a8abad" stroke-width="1.3"/>
<text class="vt a f10" x="20.6" y="838">0.00</text><text class="vt a f10" x="62" y="838">-18.9</text><text class="num e f14" x="75.6" y="907">1</text>
<text class="nt f13" x=".6" y="932" textLength="61" lengthAdjust="spacingAndGlyphs">Stereo In 1</text></g>

<g class="in" transform="translate(411.4)"><use href="#S"/><use href="#kr" x="4.1" y="681.7"/>
<rect x="46.6" y="778.3" width="33" height="31.7" fill="#19dcf0"/><path d="M46.6 785.6H79.6M46.6 800H79.6" stroke="#148fa0"/>
<rect x="87" y="578" width="1" height="335" fill="#111"/>
<use href="#i-in" x="6" y="902" class="cn"/><circle cx="25.6" cy="902" r="3" fill="none" stroke="#a8abad" stroke-width="1.3"/>
<text class="vt a f10" x="20.6" y="838">0.00</text><text class="vt a f10" x="62" y="838">-18.9</text><text class="num e f14" x="75.6" y="907">2</text>
<text class="nt f13" x=".6" y="932" textLength="58" lengthAdjust="spacingAndGlyphs">Mono In 1</text></g>

<g class="in" transform="translate(502.4)"><use href="#S"/><use href="#kr" x="4.1" y="681.7"/>
<rect x="46.6" y="806.7" width="33" height="3.3" fill="#19dcf0"/>
<use href="#i-in" x="6" y="902" class="cn"/><circle cx="25.6" cy="902" r="3" fill="none" stroke="#a8abad" stroke-width="1.3"/>
<text class="vt a f10" x="20.6" y="838">0.00</text><text class="vt a f10" x="62" y="838">-68.6</text><text class="num e f14" x="75.6" y="907">3</text>
<text class="nt f13" x=".6" y="932" textLength="58" lengthAdjust="spacingAndGlyphs">Mono In 2</text></g>

<g class="se" transform="translate(607.3)"><use href="#S"/><use href="#P"/><use href="#kb" x="4.1" y="729.3"/>
<rect x="-4" y="941" width="91" height="6" fill="#b4c6da"/><rect x="87" y="578" width="1" height="369" fill="#1a1d20"/>
<use href="#i-wv" x="6.6" y="902" style="color:#222"/><circle cx="28" cy="901" r="2.6" fill="none" stroke="#333" stroke-width="1.1"/>
<text class="vt a f10" x="20.6" y="838">-11.0</text><text class="vt a f10" x="62" y="838">-22.2</text><text class="num e f14" x="76.4" y="907">1</text>
<text class="nt f13" x=".6" y="932" textLength="23" lengthAdjust="spacingAndGlyphs">Tara</text></g>

<g class="tr" transform="translate(698.3)"><use href="#S"/><use href="#P"/><use href="#kb" x="4.1" y="703.3"/><rect x="87" y="578" width="1" height="369" fill="#1a1d20"/>
<use href="#i-wv" x="6.6" y="902" style="color:#c4c6c8"/><circle cx="28" cy="901" r="2.6" fill="none" stroke="#c4c6c8" stroke-width="1.1"/>
<text class="vt a f10" x="20.6" y="838">-4.11</text><text class="vt a f10" x="62" y="838">-15.2</text><text class="num e f14" x="76.4" y="907">2</text>
<text class="nt f13" x=".6" y="932" textLength="66" lengthAdjust="spacingAndGlyphs">Tara Octave</text></g>

<g class="tr" transform="translate(789.3)"><use href="#S"/><use href="#P"/><use href="#kb" x="4.1" y="686"/><rect x="87" y="578" width="1" height="369" fill="#1a1d20"/>
<use href="#i-wv" x="6.6" y="902" style="color:#c4c6c8"/><circle cx="28" cy="901" r="2.6" fill="none" stroke="#c4c6c8" stroke-width="1.1"/>
<text class="vt a f10" x="20.6" y="838">-0.77</text><text class="vt a f10" x="62" y="838">-15.5</text><text class="num e f14" x="76.4" y="907">3</text>
<text class="nt f13" x=".6" y="932" textLength="45" lengthAdjust="spacingAndGlyphs">Bracken</text></g>

<g class="tr" transform="translate(880.3)"><use href="#S"/><use href="#P"/><use href="#kb" x="4.1" y="724.3"/><rect x="87" y="578" width="1" height="369" fill="#1a1d20"/>
<use href="#i-wv" x="6.6" y="902" style="color:#c4c6c8"/><circle cx="28" cy="901" r="2.6" fill="none" stroke="#c4c6c8" stroke-width="1.1"/>
<text class="vt a f10" x="20.6" y="838">-9.52</text><text class="vt a f10" x="62" y="838">-23.5</text><text class="num e f14" x="76.4" y="907">4</text>
<text class="nt f13" x=".6" y="932" textLength="23" lengthAdjust="spacingAndGlyphs">Lois</text></g>

<g class="tr" transform="translate(971.3)"><use href="#S"/><use href="#P"/><use href="#kb" x="4.1" y="687.3"/><rect x="87" y="578" width="1" height="369" fill="#1a1d20"/>
<use href="#i-wv" x="6.6" y="902" style="color:#c4c6c8"/><circle cx="28" cy="901" r="2.6" fill="none" stroke="#c4c6c8" stroke-width="1.1"/>
<text class="vt a f10" x="20.6" y="838">-0.94</text><text class="vt a f10" x="62" y="838">-12.9</text><text class="num e f14" x="76.4" y="907">5</text>
<text class="nt f13" x=".6" y="932" textLength="65" lengthAdjust="spacingAndGlyphs">Lois Octave</text></g>

<g class="tr" transform="translate(1062.3)"><use href="#S"/><use href="#P"/><use href="#kb" x="4.1" y="689"/><rect x="87" y="578" width="1" height="369" fill="#1a1d20"/>
<use href="#i-wv" x="6.6" y="902" style="color:#c4c6c8"/><circle cx="28" cy="901" r="2.6" fill="none" stroke="#c4c6c8" stroke-width="1.1"/>
<text class="vt a f10" x="20.6" y="838">-1.28</text><text class="vt a f10" x="62" y="838">-12.7</text><text class="num e f14" x="76.4" y="907">6</text>
<text class="nt f13" x=".6" y="932" textLength="24" lengthAdjust="spacingAndGlyphs">Clay</text></g>

<g class="tr" transform="translate(1153.3)"><use href="#S"/><use href="#P"/><use href="#kb" x="4.1" y="657.3"/><rect x="87" y="578" width="1" height="369" fill="#1a1d20"/>
<use href="#i-wv" x="6.6" y="902" style="color:#c4c6c8"/><circle cx="28" cy="901" r="2.6" fill="none" stroke="#c4c6c8" stroke-width="1.1"/>
<text class="vt a f10" x="20.6" y="838">5.38</text><text class="vt a f10" x="62" y="838">-12.8</text><text class="num e f14" x="76.4" y="907">7</text>
<text class="nt f13" x=".6" y="932" textLength="27" lengthAdjust="spacingAndGlyphs">Orch</text></g>

<g class="tr" transform="translate(1244.3)"><use href="#S"/><use href="#P"/><use href="#kb" x="4.1" y="689"/><rect x="87" y="578" width="1" height="369" fill="#1a1d20"/>
<use href="#i-wv" x="6.6" y="902" style="color:#c4c6c8"/><circle cx="28" cy="901" r="2.6" fill="none" stroke="#c4c6c8" stroke-width="1.1"/>
<text class="vt a f10" x="20.6" y="838">-1.28</text><text class="vt a f10" x="62" y="838">-oo</text><text class="num e f14" x="76.4" y="907">8</text>
<text class="nt f13" x=".6" y="932" textLength="55" lengthAdjust="spacingAndGlyphs">TaraGuide</text></g>

<g class="tr" transform="translate(1335.3)"><use href="#S"/><use href="#P"/><use href="#kb" x="4.1" y="688.3"/><rect x="87" y="578" width="1" height="369" fill="#1a1d20"/>
<use href="#i-wv" x="6.6" y="902" style="color:#c4c6c8"/><circle cx="28" cy="901" r="2.6" fill="none" stroke="#c4c6c8" stroke-width="1.1"/>
<text class="vt a f10" x="20.6" y="838">-1.10</text><text class="vt a f10" x="62" y="838">-oo</text><text class="num e f14" x="76.4" y="907">9</text>
<text class="nt f13" x=".6" y="932" textLength="79" lengthAdjust="spacingAndGlyphs">BrackenGuide</text></g>

<g class="tr" transform="translate(1426.3)"><use href="#S"/><use href="#P"/><use href="#kb" x="4.1" y="691.7"/>
<use href="#i-wv" x="6.6" y="902" style="color:#c4c6c8"/><circle cx="28" cy="901" r="2.6" fill="none" stroke="#c4c6c8" stroke-width="1.1"/>
<text class="vt a f10" x="20.6" y="838">-1.81</text><text class="vt a f10" x="62" y="838">-oo</text><text class="num e f14" x="76.4" y="907">10</text>
<text class="nt f13" x=".6" y="932" textLength="56" lengthAdjust="spacingAndGlyphs">LoisGuide</text></g>

<g class="so" transform="translate(1570.2)"><use href="#S"/><use href="#P"/><use href="#kr" x="4.1" y="681.7"/>
<use href="#i-out" x="6" y="902" class="cn"/><path d="M22 899.5A3 3 0 1 0 22 904.5L28 899.5A3 3 0 1 1 28 904.5Z" fill="none" stroke="#a8abad" stroke-width="1.3"/>
<text class="vt a f10" x="20.6" y="838">0.00</text><text class="vt a f10" x="62" y="838">-6.3</text><text class="num e f14" x="76.4" y="907">1</text>
<text class="nt f13" x=".6" y="932" textLength="62" lengthAdjust="spacingAndGlyphs">Stereo Out</text></g>

<rect x="317" y="947" width="1356" height="11.3" fill="#3f4347"/><rect x="334.7" y="949" width="1099.3" height="8.3" rx="2" fill="#f2f2f2"/>
<path d="M326 949.5L323 952.7L326 956M1663 949.5L1666 952.7L1663 956" stroke="#d8dadc" fill="none" stroke-width="1.2"/>
<path d="M279 975L287 983M287 975L279 983" stroke="#d8dadc" stroke-width="2.2"/>
<text x="313.5" y="983.5" class="f13 b" style="fill:#e6e7e8" textLength="66.5" lengthAdjust="spacingAndGlyphs">MixConsole</text>
<text x="420" y="983.5" class="f13 b" style="fill:#c4c6c8" textLength="34" lengthAdjust="spacingAndGlyphs">Editor</text>
<text x="494" y="983.5" class="f13 b" style="fill:#c4c6c8" textLength="92" lengthAdjust="spacingAndGlyphs">Sampler Control</text>
<text x="626" y="983.5" class="f13 b" style="fill:#c4c6c8" textLength="64" lengthAdjust="spacingAndGlyphs">Chord Pads</text>
<text x="730.6" y="983.5" class="f13 b" style="fill:#c4c6c8" textLength="74.6" lengthAdjust="spacingAndGlyphs">MIDI Remote</text>

<!-- Media panel -->
<path d="M1688 986V188Q1688 180 1696 180H1748Q1756 180 1756 172V166Q1756 158 1764 158H1828Q1836 158 1836 166V172Q1836 180 1844 180H1907Q1915 180 1915 188V978Q1915 986 1907 986H1696Q1688 986 1688 978Z" fill="#23272b" stroke="#4d5156" stroke-width="2.5"/>
<text x="1708.6" y="173.5" class="f13 b" style="fill:#dcdee0" textLength="25" lengthAdjust="spacingAndGlyphs">VSTi</text><text x="1779" y="173.5" class="f13 b" style="fill:#e6e7e8" textLength="34.5" lengthAdjust="spacingAndGlyphs">Media</text>
<rect x="1695.5" y="188.5" width="163.5" height="18.5" rx="2" fill="#1c1f22" stroke="#3f4347"/><circle cx="1706" cy="197" r="3.6" fill="none" stroke="#c4c6c8" stroke-width="1.3"/><path d="M1703 200L1700 204" stroke="#c4c6c8" stroke-width="1.5"/><text x="1715" y="202" class="f11" style="fill:#989b9e;font-style:italic">Search</text>
<path d="M1865.5 194L1872.5 201M1872.5 194L1865.5 201" stroke="#5e6266" stroke-width="2"/>
<rect x="1883" y="189.5" width="23.5" height="18" rx="1" fill="#23272b" stroke="#7a7e82"/><path d="M1889 194H1901M1889 198.5H1901M1889 203H1901" stroke="#e6e7e8" stroke-width="1.6"/><path d="M1886 194H1888M1886 198.5H1888M1886 203H1888" stroke="#e6e7e8" stroke-width="1.6"/>
<rect x="1695.5" y="214" width="19" height="19.7" rx="2" fill="#2f3337"/><path d="M1710 224H1700M1704 220L1700 224L1704 228" fill="none" stroke="#5e6266" stroke-width="1.8"/>
<path d="M1720.5 224.5L1727.8 217.5L1735 224.5H1733V231H1729.5V226.5H1726V231H1722.5V224.5Z" fill="#dcdee0"/>
<rect x="1695" y="238" width="212" height="1" fill="#5a5e62"/>
<g fill="#a8abad"><rect x="1710" y="276" width="70" height="70" rx="1"/><rect x="1818" y="276" width="70" height="70" rx="1"/><rect x="1710" y="400" width="70" height="70" rx="1"/><rect x="1818" y="400" width="70" height="70" rx="1"/><rect x="1710" y="524" width="70" height="70" rx="1"/><rect x="1818" y="524" width="70" height="70" rx="1"/><rect x="1710" y="648" width="70" height="70" rx="1"/></g>
<rect x="1723" y="290" width="44" height="42" rx="3" fill="#23272b"/><path d="M1733.5 290V312M1745.5 290V312M1756.5 290V312M1739.5 312V332M1751.5 312V332" stroke="#a8abad" stroke-width="1.8"/>
<text x="1830.6" y="326" class="b" style="font-size:40px;fill:#23272b" textLength="47.5" lengthAdjust="spacingAndGlyphs">FX</text>
<path d="M1739 418A17.5 17.5 0 1 1 1729 441" fill="none" stroke="#23272b" stroke-width="5.5"/><path d="M1732 425L1722 438H1741Z" fill="#23272b"/>
<path d="M1828 428L1836 415H1851L1859 428L1851 441.5H1836Z" fill="#23272b"/><path d="M1855 444.5L1861 434.5H1872L1878 444.5L1872 455H1861Z" fill="#23272b"/>
<path d="M1721.5 552.5L1729 538.5H1745L1752.5 552.5L1745 567H1729Z" fill="#23272b"/><circle cx="1751.5" cy="558" r="9" fill="#a8abad"/><circle cx="1751.5" cy="558" r="6.5" fill="#23272b"/><path d="M1741 580V572Q1741 566 1748 565H1756Q1764 566 1764 572V580Z" fill="#23272b"/>
<rect x="1827" y="545" width="52" height="19" rx="3" fill="#23272b"/><circle cx="1865" cy="554" r="2" fill="#a8abad"/><circle cx="1872" cy="554" r="2" fill="#a8abad"/><circle cx="1845.3" cy="566.7" r="8" fill="#a8abad" stroke="#23272b" stroke-width="2.6"/><path d="M1851 573L1859.6 579" stroke="#23272b" stroke-width="3"/>
<path d="M1745.5 660L1752 677H1769L1756 689L1761 706L1745.5 696L1730 706L1735 689L1722 677H1739Z" fill="#23272b"/>
<g><text class="a f12" x="1745" y="370" style="fill:#e6e7e8">VST Instruments</text><text class="a f12" x="1853" y="370" style="fill:#e6e7e8">VST Effects</text><text class="a f12" x="1745" y="494" style="fill:#e6e7e8">Loops &amp; Samples</text><text class="a f12" x="1853" y="494" style="fill:#e6e7e8">Presets</text><text class="a f12" x="1745" y="618" style="fill:#e6e7e8">User Presets</text><text class="a f12" x="1853" y="618" style="fill:#e6e7e8">File Browser</text><text class="a f12" x="1745" y="742" style="fill:#e6e7e8">Favorites</text></g>

<!-- Transport -->
<rect y="991.7" width="1920" height="40.3" fill="#23272b"/>
<rect x="4" y="999.3" width="24.6" height="24" rx="2" fill="#4b4f53"/><circle cx="16.3" cy="1011" r="6.5" fill="none" stroke="#dcdee0" stroke-width="2"/><path d="M16.3 1007V1011.5H20" fill="none" stroke="#dcdee0" stroke-width="1.5"/>
<rect class="dk" x="35" y="999.5" width="42.5" height="23.5" rx="2"/><circle cx="47" cy="1011" r="5" fill="#dcdee0"/><use href="#i-dn" x="65.7" y="1011" style="color:#dcdee0"/><use href="#i-dots" x="81" y="1011"/>
<rect class="dk" x="89.4" y="999.5" width="43" height="23.5" rx="2"/><use href="#i-wv" x="102" y="1011" style="color:#dcdee0"/><use href="#i-dn" x="121" y="1011" style="color:#dcdee0"/><use href="#i-dots" x="136" y="1011"/>
<rect class="dk" x="144" y="999.5" width="43.5" height="23.5" rx="2"/><circle cx="156" cy="1011" r="7" fill="#dcdee0"/><path d="M152 1008H153M156 1006V1007M160 1008H159M152 1012H153M160 1012H159" stroke="#16181b" stroke-width="1.4"/><use href="#i-dn" x="176" y="1011" style="color:#dcdee0"/><use href="#i-dots" x="191" y="1011"/>
<rect x="199" y="999.3" width="37.7" height="24" rx="1" fill="#3a3e42"/><text class="a f14" x="218" y="1016" style="fill:#b4b7b9">AQ</text>
<rect class="dk" x="486.5" y="999.5" width="149.5" height="23.5" rx="2"/><rect x="486.5" y="999.5" width="24.5" height="23.5" rx="2" fill="#3a3e42"/><path d="M495 1005H503L495 1015V1018Z" fill="#dcdee0"/>
<text class="f16" x="551" y="1016.5" style="fill:#dcdee0" textLength="78" lengthAdjust="spacing">1. 1. 1.  0</text>
<rect class="dk" x="646.5" y="999.5" width="149" height="23.5" rx="2"/><rect x="646.5" y="999.5" width="24" height="23.5" rx="2" fill="#3a3e42"/><path d="M654 1005H662V1017L660 1015Z" fill="#dcdee0"/>
<text x="702" y="1016.5" class="f16" style="fill:#dcdee0" textLength="87" lengthAdjust="spacing">33. 2. 3. 52</text>
<rect class="gb" x="801" y="999.5" width="50" height="23.5" rx="2"/><path d="M809 1005H818L814.5 1010L818 1016H809L812.5 1010Z" fill="#dcdee0"/><path d="M838 1005V1006M834 1016L838 1008L842 1016Z" fill="#dcdee0" stroke="#dcdee0"/>
<rect x="856.5" y="996.5" width="199" height="31" rx="3" fill="#5e6165" stroke="#c4c6c8"/><rect x="906" y="997" width="50" height="30" fill="#ececec"/>
<path d="M872 1015H884Q889 1013 883 1007L878 1005L876 1010" fill="none" stroke="#e6e7e8" stroke-width="1.5"/>
<rect x="926" y="1006" width="10" height="11" fill="none" stroke="#111" stroke-width="2.2"/>
<path d="M977 1005L989 1012L977 1019Z" fill="none" stroke="#f0f0f0" stroke-width="1.8"/><circle cx="1032" cy="1012" r="5.6" fill="none" stroke="#f0f0f0" stroke-width="1.9"/>
<use href="#i-dots" x="1059" y="1011"/>
<rect class="gb" x="1067" y="999.5" width="38" height="23.5" rx="2"/><circle cx="1085" cy="1011" r="4" fill="#6a6e72"/><path d="M1088 1005Q1094 1011 1088 1017" fill="none" stroke="#6a6e72" stroke-width="2"/>
<rect class="dk" x="1110" y="999.5" width="149.6" height="23.5" rx="2"/><rect x="1110" y="999.5" width="24.7" height="23.5" rx="2" fill="#2f3337"/><path d="M1126 1004V1015" stroke="#dcdee0" stroke-width="1.6"/><circle cx="1122.5" cy="1016" r="3.5" fill="#dcdee0"/>
<text x="1175" y="1016.5" class="f16" style="fill:#dcdee0" textLength="78" lengthAdjust="spacing">5. 2. 2. 72</text><use href="#i-dots" x="1263" y="1011"/>
<rect class="gb" x="1271" y="999.5" width="50" height="23.5" rx="2"/><path d="M1280 1006V1016M1283 1006V1016" stroke="#dcdee0" stroke-width="1.4"/><path d="M1285 1006L1291 1011L1285 1016Z" fill="#dcdee0"/><path d="M1303 1006H1308V1016H1303ZM1310 1006H1315V1016H1310Z" fill="#dcdee0"/><use href="#i-dots" x="1324" y="1011"/>
<rect class="gb" x="1332" y="999.5" width="181.5" height="23.5" rx="2"/><rect x="1357" y="1000" width="81" height="22.5" fill="#16181b"/><rect x="1489" y="1000" width="24" height="22.5" fill="#16181b"/>
<path d="M1341 1006V1016M1348 1004V1018M1345 1008L1348 1004L1351 1008M1345 1014L1348 1018L1351 1014" fill="none" stroke="#dcdee0" stroke-width="1.4"/><circle cx="1339" cy="1016" r="2.5" fill="#dcdee0"/>
<text x="1369" y="1016" class="f14" style="fill:#c4c6c8" textLength="45" lengthAdjust="spacing">120.000</text><path d="M1423.5 1009L1427 1004L1430.5 1009ZM1423.5 1013L1427 1018L1430.5 1013Z" fill="#c4c6c8"/>
<text class="a f14" x="1463.7" y="1016.5" style="fill:#c4c6c8">Tap</text><use href="#i-dn" x="1501.6" y="1011" style="color:#dcdee0"/><use href="#i-dots" x="1517" y="1011"/>
<rect class="gb" x="1760.4" y="999.5" width="49" height="23.5" rx="2"/><path d="M1770 1018L1774 1004H1777L1780 1018ZM1776 1010L1781 1004" fill="#dcdee0" stroke="#dcdee0"/><use href="#i-e" transform="translate(1797.6 1011) scale(1.25)" style="color:#dcdee0"/><use href="#i-dots" x="1813" y="1011"/>
<rect class="dk" x="1821" y="999.5" width="88.4" height="23.5" rx="2"/><path d="M1847 1003V1019" stroke="#5a5e62"/><rect x="1860" y="1017" width="17" height="5" fill="#19dcf0"/><use href="#i-dots" x="1913" y="1011"/>
</svg>
</body></html>
